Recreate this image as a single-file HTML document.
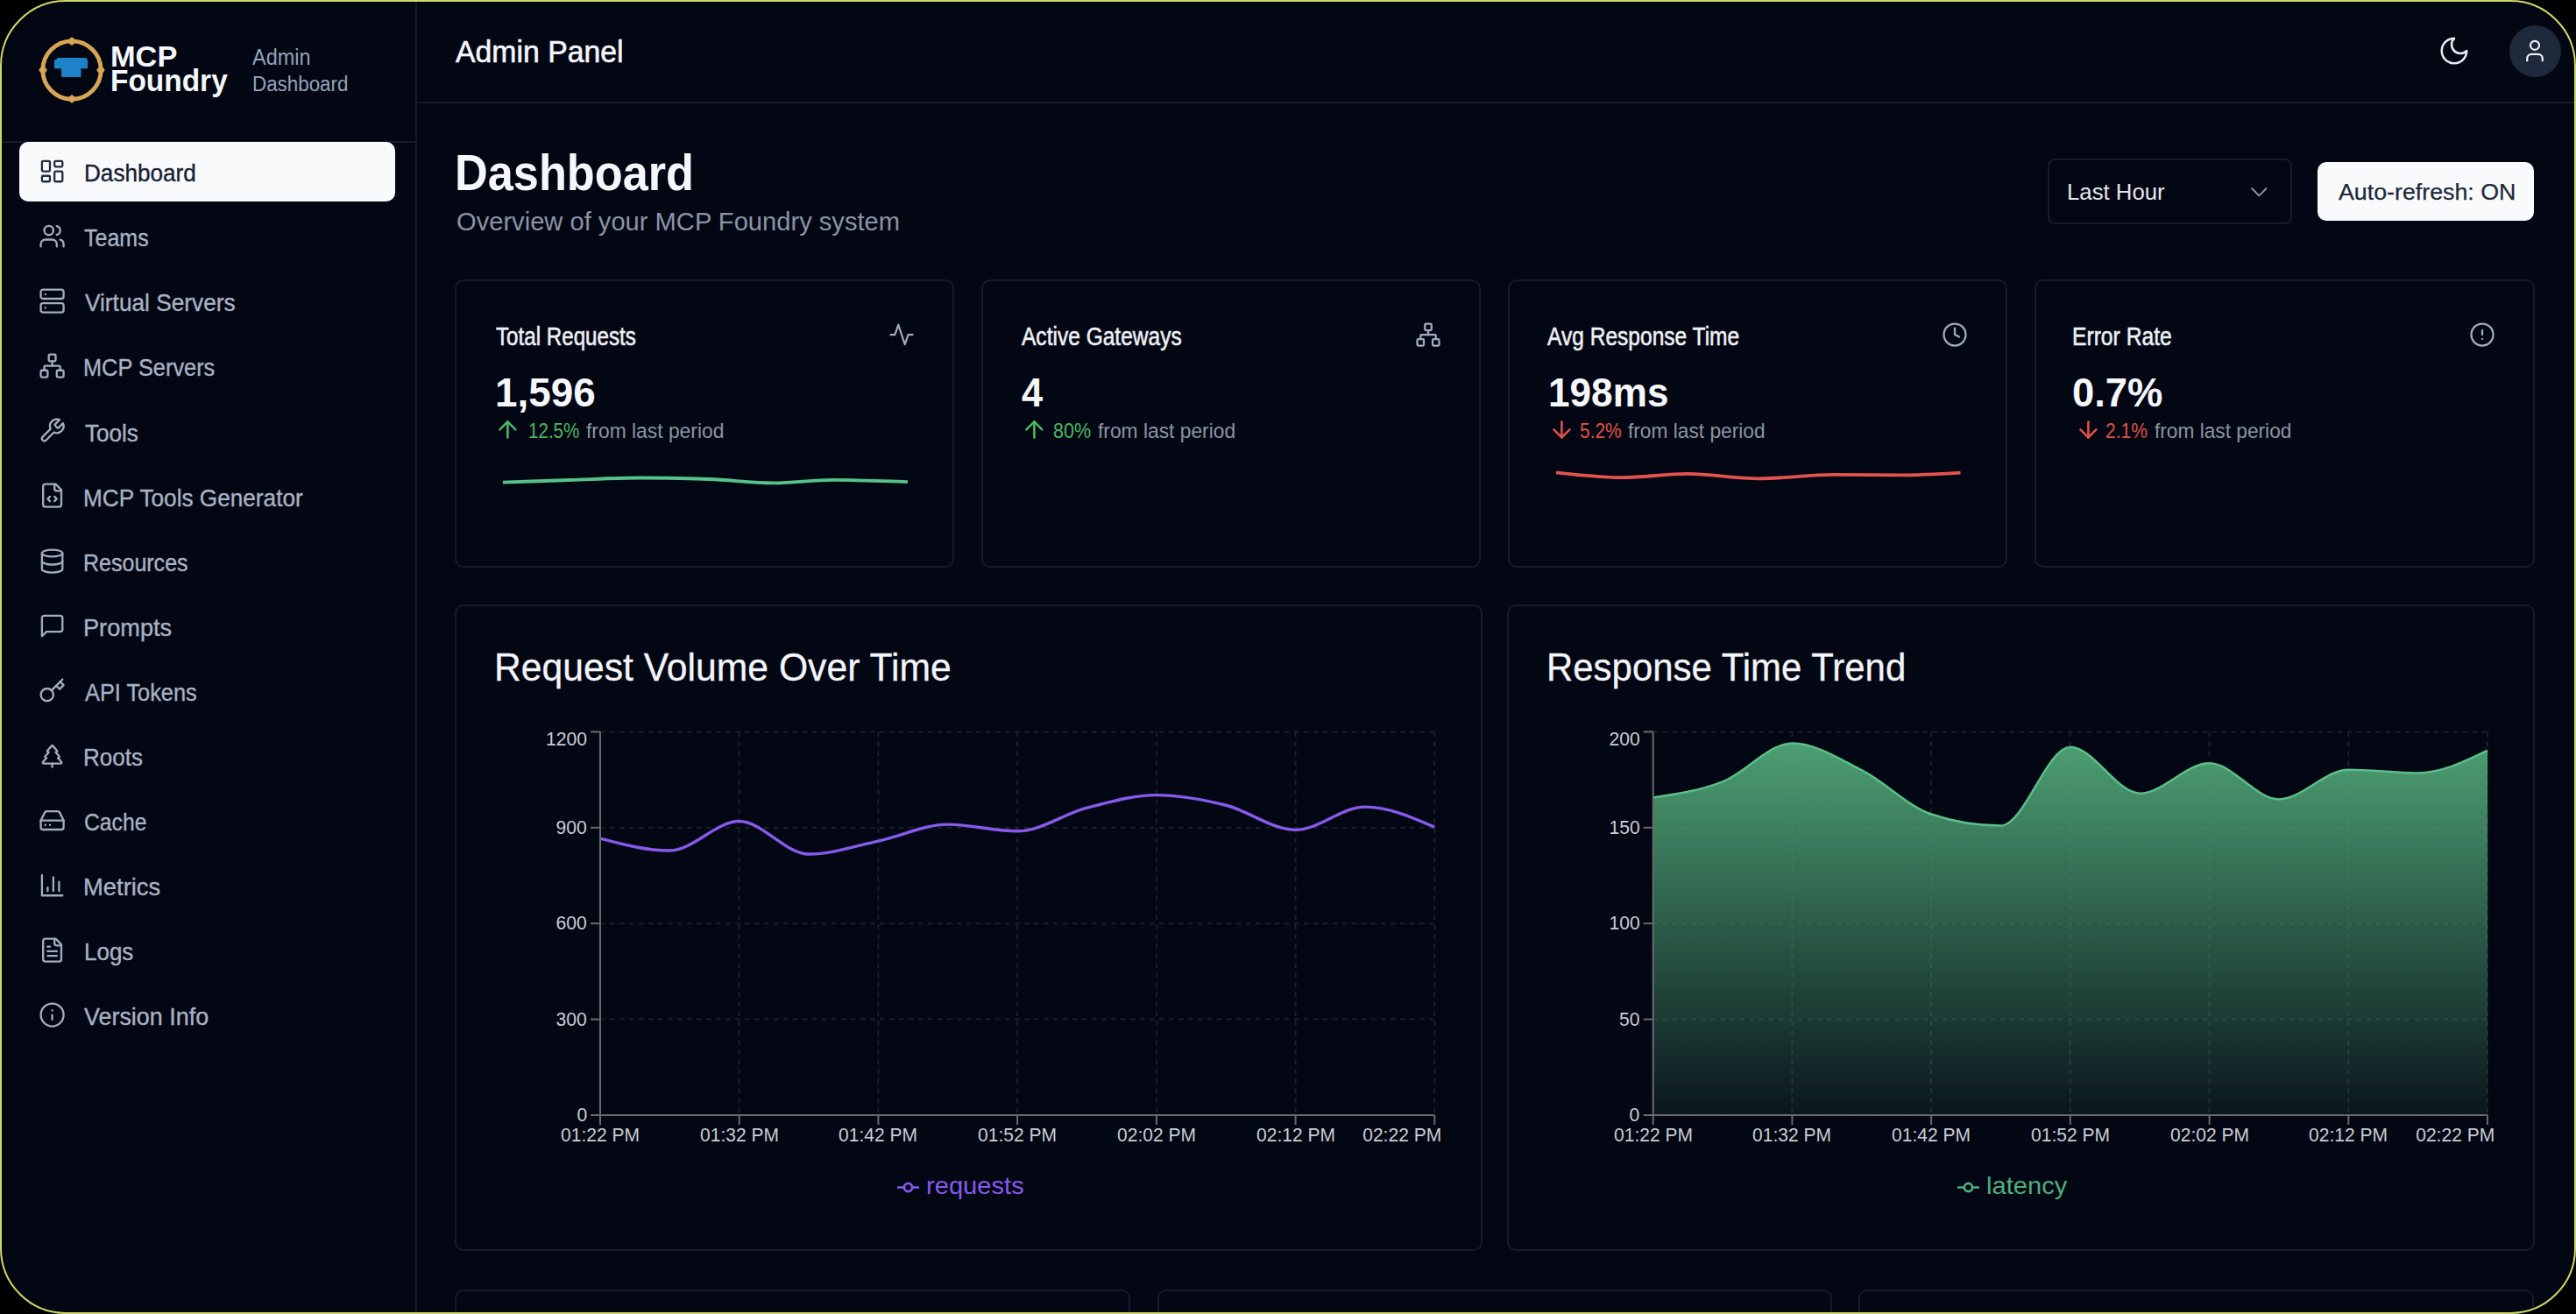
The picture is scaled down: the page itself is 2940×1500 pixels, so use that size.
<!DOCTYPE html>
<html><head><meta charset="utf-8"><title>MCP Foundry Dashboard</title>
<style>
html,body{margin:0;padding:0;background:#000;width:2940px;height:1500px;overflow:hidden}
#frame{position:absolute;left:0;top:0;width:2940px;height:1500px;box-sizing:border-box;border:2px solid #cfd96a;border-radius:75px;background:#030714;overflow:hidden}
#inner{position:absolute;left:-2px;top:-2px;width:2940px;height:1500px}
.t{position:absolute;white-space:nowrap;font-family:"Liberation Sans",sans-serif}
.b{position:absolute}
</style></head><body>
<div id="frame"><div id="inner">
<div class="b" style="left:474px;top:0px;width:2px;height:1500px;background:#161b2a"></div>
<div class="b" style="left:0px;top:161px;width:474px;height:2px;background:#161b2a"></div>
<div class="b" style="left:476px;top:116px;width:2464px;height:2px;background:#161b2a"></div>
<svg class="b" style="left:40px;top:38px" width="84" height="84" viewBox="0 0 84 84">
<circle cx="42" cy="42" r="33.2" fill="none" stroke="#d7a555" stroke-width="4.8"/>
<path d="M42 4.2 L48.5 8.9 L42 13.9 L35.5 8.9Z M42 79.8 L48.5 75.1 L42 70.1 L35.5 75.1Z M4.2 42 L8.9 35.5 L13.9 42 L8.9 48.5Z M79.8 42 L75.1 35.5 L70.1 42 L75.1 48.5Z" fill="#d7a555"/>
<path d="M24 30.3 L25.8 28.1 L58.2 28.1 L60 30.3 L60 40.3 L52.4 40.3 L52.4 49.9 L30 49.9 L30 40.3 L22 40.3 L22 30.3Z" fill="#1e82c8"/>
</svg>
<div class="b" style="left:22px;top:162px;width:429px;height:67.5px;background:#f8fafc;border-radius:10px"></div>
<svg class="b" style="left:43.5px;top:180.1px" width="31.2" height="31.2" viewBox="0 0 24 24" fill="none" stroke="#232d3f" stroke-width="1.8" stroke-linecap="round" stroke-linejoin="round"><rect x="3" y="3" width="7" height="9" rx="1"/><rect x="14" y="3" width="7" height="5" rx="1"/><rect x="14" y="12" width="7" height="9" rx="1"/><rect x="3" y="16" width="7" height="5" rx="1"/></svg>
<svg class="b" style="left:43.5px;top:254.2px" width="31.2" height="31.2" viewBox="0 0 24 24" fill="none" stroke="#a3acbe" stroke-width="1.8" stroke-linecap="round" stroke-linejoin="round"><path d="M16 21v-2a4 4 0 0 0-4-4H6a4 4 0 0 0-4 4v2"/><circle cx="9" cy="7" r="4"/><path d="M22 21v-2a4 4 0 0 0-3-3.87"/><path d="M16 3.13a4 4 0 0 1 0 7.75"/></svg>
<svg class="b" style="left:43.5px;top:328.2px" width="31.2" height="31.2" viewBox="0 0 24 24" fill="none" stroke="#a3acbe" stroke-width="1.8" stroke-linecap="round" stroke-linejoin="round"><rect width="20" height="8" x="2" y="2" rx="2" ry="2"/><rect width="20" height="8" x="2" y="14" rx="2" ry="2"/><line x1="6" x2="6.01" y1="6" y2="6"/><line x1="6" x2="6.01" y1="18" y2="18"/></svg>
<svg class="b" style="left:43.5px;top:402.3px" width="31.2" height="31.2" viewBox="0 0 24 24" fill="none" stroke="#a3acbe" stroke-width="1.8" stroke-linecap="round" stroke-linejoin="round"><rect x="16" y="16" width="6" height="6" rx="1"/><rect x="2" y="16" width="6" height="6" rx="1"/><rect x="9" y="2" width="6" height="6" rx="1"/><path d="M5 16v-3a1 1 0 0 1 1-1h12a1 1 0 0 1 1 1v3"/><path d="M12 12V8"/></svg>
<svg class="b" style="left:43.5px;top:476.3px" width="31.2" height="31.2" viewBox="0 0 24 24" fill="none" stroke="#a3acbe" stroke-width="1.8" stroke-linecap="round" stroke-linejoin="round"><path d="M14.7 6.3a1 1 0 0 0 0 1.4l1.6 1.6a1 1 0 0 0 1.4 0l3.77-3.77a6 6 0 0 1-7.94 7.94l-6.91 6.91a2.12 2.12 0 0 1-3-3l6.91-6.91a6 6 0 0 1 7.94-7.94l-3.76 3.76z"/></svg>
<svg class="b" style="left:43.5px;top:550.4px" width="31.2" height="31.2" viewBox="0 0 24 24" fill="none" stroke="#a3acbe" stroke-width="1.8" stroke-linecap="round" stroke-linejoin="round"><path d="M15 2H6a2 2 0 0 0-2 2v16a2 2 0 0 0 2 2h12a2 2 0 0 0 2-2V7Z"/><path d="M14 2v4a2 2 0 0 0 2 2h4"/><path d="m10 13-2 2 2 2"/><path d="m14 17 2-2-2-2"/></svg>
<svg class="b" style="left:43.5px;top:624.5px" width="31.2" height="31.2" viewBox="0 0 24 24" fill="none" stroke="#a3acbe" stroke-width="1.8" stroke-linecap="round" stroke-linejoin="round"><ellipse cx="12" cy="5" rx="9" ry="3"/><path d="M3 5V19A9 3 0 0 0 21 19V5"/><path d="M3 12A9 3 0 0 0 21 12"/></svg>
<svg class="b" style="left:43.5px;top:698.5px" width="31.2" height="31.2" viewBox="0 0 24 24" fill="none" stroke="#a3acbe" stroke-width="1.8" stroke-linecap="round" stroke-linejoin="round"><path d="M21 15a2 2 0 0 1-2 2H7l-4 4V5a2 2 0 0 1 2-2h14a2 2 0 0 1 2 2z"/></svg>
<svg class="b" style="left:43.5px;top:772.6px" width="31.2" height="31.2" viewBox="0 0 24 24" fill="none" stroke="#a3acbe" stroke-width="1.8" stroke-linecap="round" stroke-linejoin="round"><circle cx="7.5" cy="15.5" r="5.5"/><path d="m21 2-9.6 9.6"/><path d="m15.5 7.5 3 3L22 7l-3-3"/></svg>
<svg class="b" style="left:43.5px;top:846.6px" width="31.2" height="31.2" viewBox="0 0 24 24" fill="none" stroke="#a3acbe" stroke-width="1.8" stroke-linecap="round" stroke-linejoin="round"><path d="m17 14 3 3.3a1 1 0 0 1-.7 1.7H4.7a1 1 0 0 1-.7-1.7L7 14h-.3a1 1 0 0 1-.7-1.7L9 9h-.2A1 1 0 0 1 8 7.3L12 3l4 4.3a1 1 0 0 1-.8 1.7H15l3 3.3a1 1 0 0 1-.7 1.7H17Z"/><path d="M12 22v-3"/></svg>
<svg class="b" style="left:43.5px;top:920.7px" width="31.2" height="31.2" viewBox="0 0 24 24" fill="none" stroke="#a3acbe" stroke-width="1.8" stroke-linecap="round" stroke-linejoin="round"><line x1="22" x2="2" y1="12" y2="12"/><path d="M5.45 5.11 2 12v6a2 2 0 0 0 2 2h16a2 2 0 0 0 2-2v-6l-3.45-6.89A2 2 0 0 0 16.76 4H7.24a2 2 0 0 0-1.79 1.11z"/><line x1="6" x2="6.01" y1="16" y2="16"/><line x1="10" x2="10.01" y1="16" y2="16"/></svg>
<svg class="b" style="left:43.5px;top:994.8px" width="31.2" height="31.2" viewBox="0 0 24 24" fill="none" stroke="#a3acbe" stroke-width="1.8" stroke-linecap="round" stroke-linejoin="round"><path d="M3 3v18h18"/><path d="M18 17V9"/><path d="M13 17V5"/><path d="M8 17v-3"/></svg>
<svg class="b" style="left:43.5px;top:1068.8px" width="31.2" height="31.2" viewBox="0 0 24 24" fill="none" stroke="#a3acbe" stroke-width="1.8" stroke-linecap="round" stroke-linejoin="round"><path d="M15 2H6a2 2 0 0 0-2 2v16a2 2 0 0 0 2 2h12a2 2 0 0 0 2-2V7Z"/><path d="M14 2v4a2 2 0 0 0 2 2h4"/><path d="M10 9H8"/><path d="M16 13H8"/><path d="M16 17H8"/></svg>
<svg class="b" style="left:43.5px;top:1142.9px" width="31.2" height="31.2" viewBox="0 0 24 24" fill="none" stroke="#a3acbe" stroke-width="1.8" stroke-linecap="round" stroke-linejoin="round"><circle cx="12" cy="12" r="10"/><path d="M12 16v-4"/><path d="M12 8h.01"/></svg>
<svg class="b" style="left:2782.0px;top:39.0px" width="38" height="38" viewBox="0 0 24 24" fill="none" stroke="#e8ebf0" stroke-width="1.6" stroke-linecap="round" stroke-linejoin="round"><path d="M12 3a6 6 0 0 0 9 9 9 9 0 1 1-9-9Z"/></svg>
<div class="b" style="left:2864px;top:29px;width:59px;height:59px;border-radius:50%;background:#1e293b"></div>
<svg class="b" style="left:2878.0px;top:43.0px" width="30" height="30" viewBox="0 0 24 24" fill="none" stroke="#eef0f4" stroke-width="1.8" stroke-linecap="round" stroke-linejoin="round"><path d="M19 21v-2a4 4 0 0 0-4-4H9a4 4 0 0 0-4 4v2"/><circle cx="12" cy="7" r="4"/></svg>
<div class="b" style="left:2337px;top:181px;width:279px;height:75px;border:2px solid #161b2a;border-radius:8px;box-sizing:border-box"></div>
<svg class="b" style="left:2561.5px;top:202.6px" width="32.6" height="32.6" viewBox="0 0 24 24" fill="none" stroke="#8a93a3" stroke-width="1.5" stroke-linecap="round" stroke-linejoin="round"><path d="m6 9 6 6 6-6"/></svg>
<div class="b" style="left:2645px;top:185px;width:247px;height:67px;background:#f8fafc;border-radius:10px"></div>
<div class="b" style="left:518.5px;top:319px;width:570.5px;height:328.5px;border:2px solid #161b2a;border-radius:10px;box-sizing:border-box"></div>
<svg class="b" style="left:1014.0px;top:367.0px" width="30" height="30" viewBox="0 0 24 24" fill="none" stroke="#a3acbe" stroke-width="1.8" stroke-linecap="round" stroke-linejoin="round"><path d="M22 12h-4l-3 9L9 3l-3 9H2"/></svg>
<svg class="b" style="left:564.1px;top:475.3px" width="30.8" height="30.8" viewBox="0 0 24 24" fill="none" stroke="#4bb865" stroke-width="2" stroke-linecap="round" stroke-linejoin="round"><path d="M12 19V5"/><path d="m5 12 7-7 7 7"/></svg>
<div class="b" style="left:1119.7px;top:319px;width:570.5px;height:328.5px;border:2px solid #161b2a;border-radius:10px;box-sizing:border-box"></div>
<svg class="b" style="left:1615.2px;top:367.0px" width="30" height="30" viewBox="0 0 24 24" fill="none" stroke="#a3acbe" stroke-width="1.8" stroke-linecap="round" stroke-linejoin="round"><rect x="16" y="16" width="6" height="6" rx="1"/><rect x="2" y="16" width="6" height="6" rx="1"/><rect x="9" y="2" width="6" height="6" rx="1"/><path d="M5 16v-3a1 1 0 0 1 1-1h12a1 1 0 0 1 1 1v3"/><path d="M12 12V8"/></svg>
<svg class="b" style="left:1165.3px;top:475.3px" width="30.8" height="30.8" viewBox="0 0 24 24" fill="none" stroke="#4bb865" stroke-width="2" stroke-linecap="round" stroke-linejoin="round"><path d="M12 19V5"/><path d="m5 12 7-7 7 7"/></svg>
<div class="b" style="left:1720.9px;top:319px;width:570.5px;height:328.5px;border:2px solid #161b2a;border-radius:10px;box-sizing:border-box"></div>
<svg class="b" style="left:2216.4px;top:367.0px" width="30" height="30" viewBox="0 0 24 24" fill="none" stroke="#a3acbe" stroke-width="1.8" stroke-linecap="round" stroke-linejoin="round"><circle cx="12" cy="12" r="10"/><polyline points="12 6 12 12 16 14"/></svg>
<svg class="b" style="left:1766.5px;top:475.3px" width="30.8" height="30.8" viewBox="0 0 24 24" fill="none" stroke="#e0514a" stroke-width="2" stroke-linecap="round" stroke-linejoin="round"><path d="M12 5v14"/><path d="m19 12-7 7-7-7"/></svg>
<div class="b" style="left:2322px;top:319px;width:570.5px;height:328.5px;border:2px solid #161b2a;border-radius:10px;box-sizing:border-box"></div>
<svg class="b" style="left:2817.5px;top:367.0px" width="30" height="30" viewBox="0 0 24 24" fill="none" stroke="#a3acbe" stroke-width="1.8" stroke-linecap="round" stroke-linejoin="round"><circle cx="12" cy="12" r="10"/><line x1="12" x2="12" y1="8" y2="12"/><line x1="12" x2="12.01" y1="16" y2="16"/></svg>
<svg class="b" style="left:2367.6px;top:475.3px" width="30.8" height="30.8" viewBox="0 0 24 24" fill="none" stroke="#e0514a" stroke-width="2" stroke-linecap="round" stroke-linejoin="round"><path d="M12 5v14"/><path d="m19 12-7 7-7-7"/></svg>
<svg class="b" style="left:0;top:0" width="2940" height="700"><path d="M574.00,550.70C599.33,549.77,624.67,548.84,650.00,548.00C677.00,547.10,704.00,545.50,731.00,545.50C757.33,545.50,783.67,546.00,810.00,547.00C834.33,547.92,858.67,551.30,883.00,551.30C905.33,551.30,927.67,547.80,950.00,547.80C978.67,547.80,1007.33,548.95,1036.00,550.10" fill="none" stroke="#55c38a" stroke-width="3.8" stroke-linecap="butt"/><path d="M1776.00,539.40C1801.00,542.25,1826.00,545.10,1851.00,545.10C1875.83,545.10,1900.67,540.90,1925.50,540.90C1952.67,540.90,1979.83,546.30,2007.00,546.30C2035.67,546.30,2064.33,541.90,2093.00,541.90C2118.33,541.90,2143.67,542.40,2169.00,542.40C2191.83,542.40,2214.67,541.00,2237.50,539.60" fill="none" stroke="#e4534e" stroke-width="3.8" stroke-linecap="butt"/></svg>
<div class="b" style="left:518.5px;top:690px;width:1173.5px;height:738px;border:2px solid #161b2a;border-radius:10px;box-sizing:border-box"></div>
<div class="b" style="left:1720px;top:690px;width:1173px;height:738px;border:2px solid #161b2a;border-radius:10px;box-sizing:border-box"></div>
<div class="b" style="left:519px;top:1472px;width:770.5px;height:88px;border:2px solid #161b2a;border-radius:10px;box-sizing:border-box"></div>
<div class="b" style="left:1320.5px;top:1472px;width:770.5px;height:88px;border:2px solid #161b2a;border-radius:10px;box-sizing:border-box"></div>
<div class="b" style="left:2120.5px;top:1472px;width:771.0px;height:88px;border:2px solid #161b2a;border-radius:10px;box-sizing:border-box"></div>
<svg class="b" style="left:0;top:0" width="2940" height="1500"><defs><linearGradient id="g685" x1="0" y1="0" x2="0" y2="1"><stop offset="0%" stop-color="#4c9e72" stop-opacity="1"/><stop offset="100%" stop-color="#4c9e72" stop-opacity="0.1"/></linearGradient></defs><line x1="685" y1="835.4" x2="1637.3" y2="835.4" stroke="#1b202d" stroke-width="2" stroke-dasharray="5.5 5.5"/><line x1="685" y1="944.8" x2="1637.3" y2="944.8" stroke="#1b202d" stroke-width="2" stroke-dasharray="5.5 5.5"/><line x1="685" y1="1054.2" x2="1637.3" y2="1054.2" stroke="#1b202d" stroke-width="2" stroke-dasharray="5.5 5.5"/><line x1="685" y1="1163.6" x2="1637.3" y2="1163.6" stroke="#1b202d" stroke-width="2" stroke-dasharray="5.5 5.5"/><line x1="843.7" y1="835.4" x2="843.7" y2="1273" stroke="#1b202d" stroke-width="2" stroke-dasharray="5.5 5.5"/><line x1="1002.4" y1="835.4" x2="1002.4" y2="1273" stroke="#1b202d" stroke-width="2" stroke-dasharray="5.5 5.5"/><line x1="1161.1" y1="835.4" x2="1161.1" y2="1273" stroke="#1b202d" stroke-width="2" stroke-dasharray="5.5 5.5"/><line x1="1319.9" y1="835.4" x2="1319.9" y2="1273" stroke="#1b202d" stroke-width="2" stroke-dasharray="5.5 5.5"/><line x1="1478.6" y1="835.4" x2="1478.6" y2="1273" stroke="#1b202d" stroke-width="2" stroke-dasharray="5.5 5.5"/><line x1="1637.3" y1="835.4" x2="1637.3" y2="1273" stroke="#1b202d" stroke-width="2" stroke-dasharray="5.5 5.5"/><path d="M685.00,957.20C711.45,964.13,737.91,971.06,764.36,971.06C790.81,971.06,817.26,937.51,843.72,937.51C870.17,937.51,896.62,975.07,923.07,975.07C949.53,975.07,975.98,965.77,1002.43,960.12C1028.89,954.46,1055.34,941.15,1081.79,941.15C1108.24,941.15,1134.70,948.81,1161.15,948.81C1187.60,948.81,1214.06,929.06,1240.51,922.19C1266.96,915.32,1293.41,907.60,1319.87,907.60C1346.32,907.60,1372.77,912.65,1399.22,919.27C1425.68,925.90,1452.13,947.35,1478.58,947.35C1505.04,947.35,1531.49,921.10,1557.94,921.10C1584.39,921.10,1610.85,932.58,1637.30,944.07" fill="none" stroke="#8759ec" stroke-width="3.4"/><line x1="685" y1="835.4" x2="685" y2="1273" stroke="#6b6b6b" stroke-width="2"/><line x1="685" y1="1273" x2="1637.3" y2="1273" stroke="#6b6b6b" stroke-width="2"/><line x1="674" y1="835.4" x2="685" y2="835.4" stroke="#6b6b6b" stroke-width="2"/><line x1="674" y1="944.8" x2="685" y2="944.8" stroke="#6b6b6b" stroke-width="2"/><line x1="674" y1="1054.2" x2="685" y2="1054.2" stroke="#6b6b6b" stroke-width="2"/><line x1="674" y1="1163.6" x2="685" y2="1163.6" stroke="#6b6b6b" stroke-width="2"/><line x1="674" y1="1273.0" x2="685" y2="1273.0" stroke="#6b6b6b" stroke-width="2"/><line x1="685.0" y1="1273" x2="685.0" y2="1284" stroke="#6b6b6b" stroke-width="2"/><line x1="843.7" y1="1273" x2="843.7" y2="1284" stroke="#6b6b6b" stroke-width="2"/><line x1="1002.4" y1="1273" x2="1002.4" y2="1284" stroke="#6b6b6b" stroke-width="2"/><line x1="1161.1" y1="1273" x2="1161.1" y2="1284" stroke="#6b6b6b" stroke-width="2"/><line x1="1319.9" y1="1273" x2="1319.9" y2="1284" stroke="#6b6b6b" stroke-width="2"/><line x1="1478.6" y1="1273" x2="1478.6" y2="1284" stroke="#6b6b6b" stroke-width="2"/><line x1="1637.3" y1="1273" x2="1637.3" y2="1284" stroke="#6b6b6b" stroke-width="2"/></svg>
<div class="t" style="right:2270.0px;top:833.0px;font-size:22px;line-height:22px;color:#c9cdd3;font-weight:400;letter-spacing:0px;transform:scaleX(0.96);transform-origin:100% 0;">1200</div>
<div class="t" style="right:2270.0px;top:933.7px;font-size:22px;line-height:22px;color:#c9cdd3;font-weight:400;letter-spacing:0px;transform:scaleX(0.96);transform-origin:100% 0;">900</div>
<div class="t" style="right:2270.0px;top:1043.1px;font-size:22px;line-height:22px;color:#c9cdd3;font-weight:400;letter-spacing:0px;transform:scaleX(0.96);transform-origin:100% 0;">600</div>
<div class="t" style="right:2270.0px;top:1152.5px;font-size:22px;line-height:22px;color:#c9cdd3;font-weight:400;letter-spacing:0px;transform:scaleX(0.96);transform-origin:100% 0;">300</div>
<div class="t" style="right:2270.0px;top:1261.9px;font-size:22px;line-height:22px;color:#c9cdd3;font-weight:400;letter-spacing:0px;transform:scaleX(0.96);transform-origin:100% 0;">0</div>
<div class="t" style="left:385.0px;width:600px;text-align:center;top:1285.4px;font-size:22px;line-height:22px;color:#c9cdd3;font-weight:400;letter-spacing:0px;transform:scaleX(0.955);transform-origin:50% 0;">01:22 PM</div>
<div class="t" style="left:543.7px;width:600px;text-align:center;top:1285.4px;font-size:22px;line-height:22px;color:#c9cdd3;font-weight:400;letter-spacing:0px;transform:scaleX(0.955);transform-origin:50% 0;">01:32 PM</div>
<div class="t" style="left:702.4px;width:600px;text-align:center;top:1285.4px;font-size:22px;line-height:22px;color:#c9cdd3;font-weight:400;letter-spacing:0px;transform:scaleX(0.955);transform-origin:50% 0;">01:42 PM</div>
<div class="t" style="left:861.1px;width:600px;text-align:center;top:1285.4px;font-size:22px;line-height:22px;color:#c9cdd3;font-weight:400;letter-spacing:0px;transform:scaleX(0.955);transform-origin:50% 0;">01:52 PM</div>
<div class="t" style="left:1019.9px;width:600px;text-align:center;top:1285.4px;font-size:22px;line-height:22px;color:#c9cdd3;font-weight:400;letter-spacing:0px;transform:scaleX(0.955);transform-origin:50% 0;">02:02 PM</div>
<div class="t" style="left:1178.6px;width:600px;text-align:center;top:1285.4px;font-size:22px;line-height:22px;color:#c9cdd3;font-weight:400;letter-spacing:0px;transform:scaleX(0.955);transform-origin:50% 0;">02:12 PM</div>
<div class="t" style="right:1294.7px;top:1285.4px;font-size:22px;line-height:22px;color:#c9cdd3;font-weight:400;letter-spacing:0px;transform:scaleX(0.955);transform-origin:100% 0;">02:22 PM</div>
<svg class="b" style="left:0;top:0" width="2940" height="1500"><defs><linearGradient id="g1886" x1="0" y1="0" x2="0" y2="1"><stop offset="0%" stop-color="#4c9e72" stop-opacity="1"/><stop offset="100%" stop-color="#4c9e72" stop-opacity="0.1"/></linearGradient></defs><line x1="1886.7" y1="835.4" x2="2839.0" y2="835.4" stroke="#1b202d" stroke-width="2" stroke-dasharray="5.5 5.5"/><line x1="1886.7" y1="944.8" x2="2839.0" y2="944.8" stroke="#1b202d" stroke-width="2" stroke-dasharray="5.5 5.5"/><line x1="1886.7" y1="1054.2" x2="2839.0" y2="1054.2" stroke="#1b202d" stroke-width="2" stroke-dasharray="5.5 5.5"/><line x1="1886.7" y1="1163.6" x2="2839.0" y2="1163.6" stroke="#1b202d" stroke-width="2" stroke-dasharray="5.5 5.5"/><line x1="2045.4" y1="835.4" x2="2045.4" y2="1273" stroke="#1b202d" stroke-width="2" stroke-dasharray="5.5 5.5"/><line x1="2204.1" y1="835.4" x2="2204.1" y2="1273" stroke="#1b202d" stroke-width="2" stroke-dasharray="5.5 5.5"/><line x1="2362.8" y1="835.4" x2="2362.8" y2="1273" stroke="#1b202d" stroke-width="2" stroke-dasharray="5.5 5.5"/><line x1="2521.6" y1="835.4" x2="2521.6" y2="1273" stroke="#1b202d" stroke-width="2" stroke-dasharray="5.5 5.5"/><line x1="2680.3" y1="835.4" x2="2680.3" y2="1273" stroke="#1b202d" stroke-width="2" stroke-dasharray="5.5 5.5"/><line x1="2839.0" y1="835.4" x2="2839.0" y2="1273" stroke="#1b202d" stroke-width="2" stroke-dasharray="5.5 5.5"/><path d="M1886.70,910.45C1913.15,906.53,1939.61,902.61,1966.06,892.29C1992.51,881.97,2018.96,848.53,2045.42,848.53C2071.87,848.53,2098.32,865.67,2124.78,879.16C2151.23,892.65,2177.68,920.73,2204.13,929.48C2230.59,938.24,2257.04,942.61,2283.49,942.61C2309.94,942.61,2336.40,852.69,2362.85,852.69C2389.30,852.69,2415.76,905.63,2442.21,905.63C2468.66,905.63,2495.11,871.28,2521.57,871.28C2548.02,871.28,2574.47,912.42,2600.93,912.42C2627.38,912.42,2653.83,878.72,2680.28,878.72C2706.74,878.72,2733.19,882.44,2759.64,882.44C2786.09,882.44,2812.55,869.53,2839.00,856.62L2839.00,1273L1886.70,1273Z" fill="url(#g1886)" stroke="none"/><path d="M1886.70,910.45C1913.15,906.53,1939.61,902.61,1966.06,892.29C1992.51,881.97,2018.96,848.53,2045.42,848.53C2071.87,848.53,2098.32,865.67,2124.78,879.16C2151.23,892.65,2177.68,920.73,2204.13,929.48C2230.59,938.24,2257.04,942.61,2283.49,942.61C2309.94,942.61,2336.40,852.69,2362.85,852.69C2389.30,852.69,2415.76,905.63,2442.21,905.63C2468.66,905.63,2495.11,871.28,2521.57,871.28C2548.02,871.28,2574.47,912.42,2600.93,912.42C2627.38,912.42,2653.83,878.72,2680.28,878.72C2706.74,878.72,2733.19,882.44,2759.64,882.44C2786.09,882.44,2812.55,869.53,2839.00,856.62" fill="none" stroke="#5cbf88" stroke-width="2.5"/><line x1="1886.7" y1="835.4" x2="1886.7" y2="1273" stroke="#6b6b6b" stroke-width="2"/><line x1="1886.7" y1="1273" x2="2839.0" y2="1273" stroke="#6b6b6b" stroke-width="2"/><line x1="1875.7" y1="835.4" x2="1886.7" y2="835.4" stroke="#6b6b6b" stroke-width="2"/><line x1="1875.7" y1="944.8" x2="1886.7" y2="944.8" stroke="#6b6b6b" stroke-width="2"/><line x1="1875.7" y1="1054.2" x2="1886.7" y2="1054.2" stroke="#6b6b6b" stroke-width="2"/><line x1="1875.7" y1="1163.6" x2="1886.7" y2="1163.6" stroke="#6b6b6b" stroke-width="2"/><line x1="1875.7" y1="1273.0" x2="1886.7" y2="1273.0" stroke="#6b6b6b" stroke-width="2"/><line x1="1886.7" y1="1273" x2="1886.7" y2="1284" stroke="#6b6b6b" stroke-width="2"/><line x1="2045.4" y1="1273" x2="2045.4" y2="1284" stroke="#6b6b6b" stroke-width="2"/><line x1="2204.1" y1="1273" x2="2204.1" y2="1284" stroke="#6b6b6b" stroke-width="2"/><line x1="2362.8" y1="1273" x2="2362.8" y2="1284" stroke="#6b6b6b" stroke-width="2"/><line x1="2521.6" y1="1273" x2="2521.6" y2="1284" stroke="#6b6b6b" stroke-width="2"/><line x1="2680.3" y1="1273" x2="2680.3" y2="1284" stroke="#6b6b6b" stroke-width="2"/><line x1="2839.0" y1="1273" x2="2839.0" y2="1284" stroke="#6b6b6b" stroke-width="2"/></svg>
<div class="t" style="right:1068.3px;top:833.0px;font-size:22px;line-height:22px;color:#c9cdd3;font-weight:400;letter-spacing:0px;transform:scaleX(0.96);transform-origin:100% 0;">200</div>
<div class="t" style="right:1068.3px;top:933.7px;font-size:22px;line-height:22px;color:#c9cdd3;font-weight:400;letter-spacing:0px;transform:scaleX(0.96);transform-origin:100% 0;">150</div>
<div class="t" style="right:1068.3px;top:1043.1px;font-size:22px;line-height:22px;color:#c9cdd3;font-weight:400;letter-spacing:0px;transform:scaleX(0.96);transform-origin:100% 0;">100</div>
<div class="t" style="right:1068.3px;top:1152.5px;font-size:22px;line-height:22px;color:#c9cdd3;font-weight:400;letter-spacing:0px;transform:scaleX(0.96);transform-origin:100% 0;">50</div>
<div class="t" style="right:1068.3px;top:1261.9px;font-size:22px;line-height:22px;color:#c9cdd3;font-weight:400;letter-spacing:0px;transform:scaleX(0.96);transform-origin:100% 0;">0</div>
<div class="t" style="left:1586.7px;width:600px;text-align:center;top:1285.4px;font-size:22px;line-height:22px;color:#c9cdd3;font-weight:400;letter-spacing:0px;transform:scaleX(0.955);transform-origin:50% 0;">01:22 PM</div>
<div class="t" style="left:1745.4px;width:600px;text-align:center;top:1285.4px;font-size:22px;line-height:22px;color:#c9cdd3;font-weight:400;letter-spacing:0px;transform:scaleX(0.955);transform-origin:50% 0;">01:32 PM</div>
<div class="t" style="left:1904.1px;width:600px;text-align:center;top:1285.4px;font-size:22px;line-height:22px;color:#c9cdd3;font-weight:400;letter-spacing:0px;transform:scaleX(0.955);transform-origin:50% 0;">01:42 PM</div>
<div class="t" style="left:2062.8px;width:600px;text-align:center;top:1285.4px;font-size:22px;line-height:22px;color:#c9cdd3;font-weight:400;letter-spacing:0px;transform:scaleX(0.955);transform-origin:50% 0;">01:52 PM</div>
<div class="t" style="left:2221.6px;width:600px;text-align:center;top:1285.4px;font-size:22px;line-height:22px;color:#c9cdd3;font-weight:400;letter-spacing:0px;transform:scaleX(0.955);transform-origin:50% 0;">02:02 PM</div>
<div class="t" style="left:2380.3px;width:600px;text-align:center;top:1285.4px;font-size:22px;line-height:22px;color:#c9cdd3;font-weight:400;letter-spacing:0px;transform:scaleX(0.955);transform-origin:50% 0;">02:12 PM</div>
<div class="t" style="right:93.0px;top:1285.4px;font-size:22px;line-height:22px;color:#c9cdd3;font-weight:400;letter-spacing:0px;transform:scaleX(0.955);transform-origin:100% 0;">02:22 PM</div>
<svg class="b" style="left:1024.0px;top:1343.0px" width="25" height="25" viewBox="0 0 24 24" fill="none" stroke="#8759ec" stroke-width="2.6" stroke-linecap="round" stroke-linejoin="round"><line x1="0" y1="12" x2="24" y2="12"/><circle cx="12" cy="12" r="4.4" fill="#030714"/></svg>
<svg class="b" style="left:2234.0px;top:1343.0px" width="25" height="25" viewBox="0 0 24 24" fill="none" stroke="#4fae7f" stroke-width="2.6" stroke-linecap="round" stroke-linejoin="round"><line x1="0" y1="12" x2="24" y2="12"/><circle cx="12" cy="12" r="4.4" fill="#030714"/></svg>
<div class="t" style="left:126.40px;top:46.90px;font-size:34.02px;line-height:34.02px;font-weight:700;color:#f5f7fa;transform:scaleX(1.0098);transform-origin:0 0;">MCP</div>
<div class="t" style="left:126.40px;top:74.80px;font-size:34.46px;line-height:34.46px;font-weight:700;color:#f5f7fa;transform:scaleX(0.9705);transform-origin:0 0;">Foundry</div>
<div class="t" style="left:288.30px;top:53.00px;font-size:24.95px;line-height:24.95px;font-weight:400;color:#94a3b8;transform:scaleX(0.9408);transform-origin:0 0;">Admin</div>
<div class="t" style="left:287.80px;top:83.80px;font-size:24.52px;line-height:24.52px;font-weight:400;color:#94a3b8;transform:scaleX(0.9125);transform-origin:0 0;">Dashboard</div>
<div class="t" style="left:96.20px;top:185.30px;font-size:26.96px;line-height:26.96px;font-weight:400;color:#172033;transform:scaleX(0.9687);transform-origin:0 0;-webkit-text-stroke:0.35px #172033;">Dashboard</div>
<div class="t" style="left:96.30px;top:259.36px;font-size:26.96px;line-height:26.96px;font-weight:400;color:#a9b2c3;transform:scaleX(0.9278);transform-origin:0 0;-webkit-text-stroke:0.35px #a9b2c3;">Teams</div>
<div class="t" style="left:96.80px;top:333.42px;font-size:26.96px;line-height:26.96px;font-weight:400;color:#a9b2c3;transform:scaleX(0.9741);transform-origin:0 0;-webkit-text-stroke:0.35px #a9b2c3;">Virtual Servers</div>
<div class="t" style="left:94.80px;top:407.48px;font-size:26.96px;line-height:26.96px;font-weight:400;color:#a9b2c3;transform:scaleX(0.9407);transform-origin:0 0;-webkit-text-stroke:0.35px #a9b2c3;">MCP Servers</div>
<div class="t" style="left:96.80px;top:481.54px;font-size:26.96px;line-height:26.96px;font-weight:400;color:#a9b2c3;transform:scaleX(0.9678);transform-origin:0 0;-webkit-text-stroke:0.35px #a9b2c3;">Tools</div>
<div class="t" style="left:94.80px;top:555.60px;font-size:26.96px;line-height:26.96px;font-weight:400;color:#a9b2c3;transform:scaleX(0.971);transform-origin:0 0;-webkit-text-stroke:0.35px #a9b2c3;">MCP Tools Generator</div>
<div class="t" style="left:94.80px;top:629.66px;font-size:26.96px;line-height:26.96px;font-weight:400;color:#a9b2c3;transform:scaleX(0.9279);transform-origin:0 0;-webkit-text-stroke:0.35px #a9b2c3;">Resources</div>
<div class="t" style="left:94.80px;top:703.72px;font-size:26.96px;line-height:26.96px;font-weight:400;color:#a9b2c3;transform:scaleX(1.0076);transform-origin:0 0;-webkit-text-stroke:0.35px #a9b2c3;">Prompts</div>
<div class="t" style="left:96.80px;top:777.78px;font-size:26.96px;line-height:26.96px;font-weight:400;color:#a9b2c3;transform:scaleX(0.9402);transform-origin:0 0;-webkit-text-stroke:0.35px #a9b2c3;">API Tokens</div>
<div class="t" style="left:94.80px;top:851.84px;font-size:26.96px;line-height:26.96px;font-weight:400;color:#a9b2c3;transform:scaleX(0.9663);transform-origin:0 0;-webkit-text-stroke:0.35px #a9b2c3;">Roots</div>
<div class="t" style="left:95.80px;top:925.90px;font-size:26.96px;line-height:26.96px;font-weight:400;color:#a9b2c3;transform:scaleX(0.9169);transform-origin:0 0;-webkit-text-stroke:0.35px #a9b2c3;">Cache</div>
<div class="t" style="left:94.80px;top:999.96px;font-size:26.96px;line-height:26.96px;font-weight:400;color:#a9b2c3;transform:scaleX(1.0163);transform-origin:0 0;-webkit-text-stroke:0.35px #a9b2c3;">Metrics</div>
<div class="t" style="left:96.00px;top:1074.02px;font-size:26.96px;line-height:26.96px;font-weight:400;color:#a9b2c3;transform:scaleX(0.9639);transform-origin:0 0;-webkit-text-stroke:0.35px #a9b2c3;">Logs</div>
<div class="t" style="left:96.30px;top:1148.08px;font-size:26.96px;line-height:26.96px;font-weight:400;color:#a9b2c3;transform:scaleX(0.9982);transform-origin:0 0;-webkit-text-stroke:0.35px #a9b2c3;">Version Info</div>
<div class="t" style="left:519.80px;top:42.20px;font-size:35.62px;line-height:35.62px;font-weight:400;color:#f5f7fa;transform:scaleX(0.9486);transform-origin:0 0;-webkit-text-stroke:0.6px #f5f7fa;">Admin Panel</div>
<div class="t" style="left:519.00px;top:170.40px;font-size:56.63px;line-height:56.63px;font-weight:700;color:#f5f7fa;transform:scaleX(0.9232);transform-origin:0 0;">Dashboard</div>
<div class="t" style="left:521.00px;top:238.00px;font-size:29.53px;line-height:29.53px;font-weight:400;color:#8a94a5;transform:scaleX(0.9867);transform-origin:0 0;">Overview of your MCP Foundry system</div>
<div class="t" style="left:2359.00px;top:207.00px;font-size:25.5px;line-height:25.5px;font-weight:400;color:#e5e7eb;transform:scaleX(1.0093);transform-origin:0 0;">Last Hour</div>
<div class="t" style="left:2668.50px;top:207.00px;font-size:25.5px;line-height:25.5px;font-weight:400;color:#1e293b;transform:scaleX(1.0497);transform-origin:0 0;-webkit-text-stroke:0.25px #1e293b;">Auto-refresh: ON</div>
<div class="t" style="left:565.80px;top:369.70px;font-size:28.75px;line-height:28.75px;font-weight:400;color:#eef0f4;transform:scaleX(0.8408);transform-origin:0 0;-webkit-text-stroke:0.55px #eef0f4;">Total Requests</div>
<div class="t" style="left:565.00px;top:424.80px;font-size:46.28px;line-height:46.28px;font-weight:700;color:#f5f7fa;transform:scaleX(0.991);transform-origin:0 0;">1,596</div>
<div class="t" style="left:602.60px;top:479.50px;font-size:24.68px;line-height:24.68px;font-weight:400;color:#4bb865;transform:scaleX(0.8337);transform-origin:0 0;">12.5%</div>
<div class="t" style="left:668.50px;top:479.50px;font-size:24.68px;line-height:24.68px;font-weight:400;color:#8a94a5;transform:scaleX(0.9255);transform-origin:0 0;">from last period</div>
<div class="t" style="left:1165.80px;top:369.70px;font-size:28.75px;line-height:28.75px;font-weight:400;color:#eef0f4;transform:scaleX(0.8535);transform-origin:0 0;-webkit-text-stroke:0.55px #eef0f4;">Active Gateways</div>
<div class="t" style="left:1165.80px;top:424.80px;font-size:46.28px;line-height:46.28px;font-weight:700;color:#f5f7fa;transform:scaleX(0.9376);transform-origin:0 0;">4</div>
<div class="t" style="left:1201.70px;top:479.50px;font-size:24.68px;line-height:24.68px;font-weight:400;color:#4bb865;transform:scaleX(0.871);transform-origin:0 0;">80%</div>
<div class="t" style="left:1252.60px;top:479.50px;font-size:24.68px;line-height:24.68px;font-weight:400;color:#8a94a5;transform:scaleX(0.9242);transform-origin:0 0;">from last period</div>
<div class="t" style="left:1766.30px;top:369.70px;font-size:28.75px;line-height:28.75px;font-weight:400;color:#eef0f4;transform:scaleX(0.8538);transform-origin:0 0;-webkit-text-stroke:0.55px #eef0f4;">Avg Response Time</div>
<div class="t" style="left:1766.90px;top:424.80px;font-size:46.28px;line-height:46.28px;font-weight:700;color:#f5f7fa;transform:scaleX(0.9542);transform-origin:0 0;">198ms</div>
<div class="t" style="left:1802.60px;top:479.50px;font-size:24.68px;line-height:24.68px;font-weight:400;color:#e0514a;transform:scaleX(0.8489);transform-origin:0 0;">5.2%</div>
<div class="t" style="left:1858.40px;top:479.50px;font-size:24.68px;line-height:24.68px;font-weight:400;color:#8a94a5;transform:scaleX(0.9206);transform-origin:0 0;">from last period</div>
<div class="t" style="left:2365.00px;top:369.70px;font-size:28.75px;line-height:28.75px;font-weight:400;color:#eef0f4;transform:scaleX(0.8577);transform-origin:0 0;-webkit-text-stroke:0.55px #eef0f4;">Error Rate</div>
<div class="t" style="left:2365.00px;top:424.80px;font-size:46.28px;line-height:46.28px;font-weight:700;color:#f5f7fa;transform:scaleX(0.9804);transform-origin:0 0;">0.7%</div>
<div class="t" style="left:2403.00px;top:479.50px;font-size:24.68px;line-height:24.68px;font-weight:400;color:#e0514a;transform:scaleX(0.8503);transform-origin:0 0;">2.1%</div>
<div class="t" style="left:2459.00px;top:479.50px;font-size:24.68px;line-height:24.68px;font-weight:400;color:#8a94a5;transform:scaleX(0.9199);transform-origin:0 0;">from last period</div>
<div class="t" style="left:563.60px;top:740.00px;font-size:44.16px;line-height:44.16px;font-weight:400;color:#f3f5f8;transform:scaleX(0.9662);transform-origin:0 0;-webkit-text-stroke:0.3px #f3f5f8;">Request Volume Over Time</div>
<div class="t" style="left:1765.00px;top:740.00px;font-size:44.16px;line-height:44.16px;font-weight:400;color:#f3f5f8;transform:scaleX(0.9497);transform-origin:0 0;-webkit-text-stroke:0.3px #f3f5f8;">Response Time Trend</div>
<div class="t" style="left:1056.60px;top:1338.70px;font-size:28.5px;line-height:28.5px;font-weight:400;color:#8759ec;transform:scaleX(1.0218);transform-origin:0 0;">requests</div>
<div class="t" style="left:2267.00px;top:1338.70px;font-size:28.5px;line-height:28.5px;font-weight:400;color:#4fae7f;transform:scaleX(1.0217);transform-origin:0 0;">latency</div>
</div></div>
</body></html>
